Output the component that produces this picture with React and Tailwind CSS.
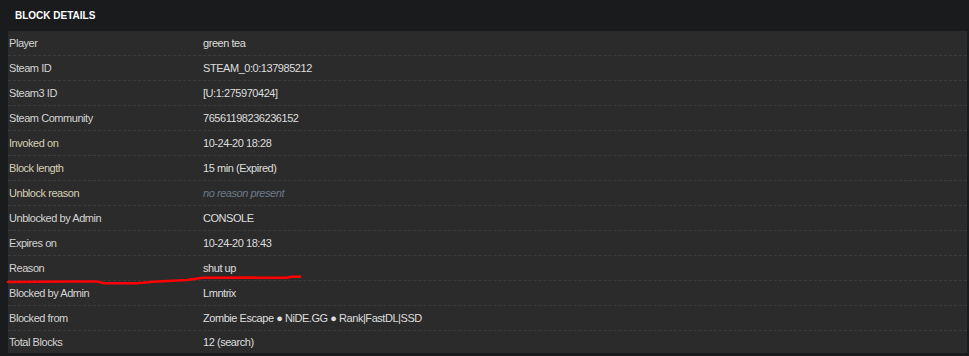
import React from "react";

const rows = [
  ["Player", "green tea"],
  ["Steam ID", "STEAM_0:0:137985212"],
  ["Steam3 ID", "[U:1:275970424]"],
  ["Steam Community", "76561198236236152"],
  ["Invoked on", "10-24-20 18:28", true],
  ["Block length", "15 min (Expired)", true],
  ["Unblock reason", null, true],
  ["Unblocked by Admin", "CONSOLE"],
  ["Expires on", "10-24-20 18:43"],
  ["Reason", "shut up"],
  ["Blocked by Admin", "Lmntrix"],
  ["Blocked from", "Zombie Escape \u25CF NiDE.GG \u25CF Rank|FastDL|SSD"],
  ["Total Blocks", "12 (search)"],
];

export default function App() {
  return (
    <div
      className="relative w-[969px] h-[356px] bg-[#1a1b1d] overflow-hidden text-[11px] tracking-[-0.45px]"
      style={{ fontFamily: '"Liberation Sans", Arial, sans-serif' }}
    >
      <div className="h-[31px] flex items-center pl-[15px]">
        <span className="font-bold text-[10px] text-white tracking-[0px]">BLOCK DETAILS</span>
      </div>
      <div className="ml-[8px] mr-[2px] bg-[#2b2b2b] h-[322px]">
        {rows.map(([label, value, warm], i) => (
          <div
            key={label}
            className={`flex items-center pt-[1px] ${
              i < rows.length - 1 ? "h-[25px] border-b border-dashed border-[#3b3b3b]" : "h-[22px]"
            }`}
          >
            <div className={`w-[195px] pl-[1px] ${warm ? "text-[#d6d0b6]" : "text-[#d4d4d4]"}`}>{label}</div>
            <div className="text-[#dedede]">
              {value === null ? (
                <span className="italic text-[#6c7a89]">no reason present</span>
              ) : (
                value
              )}
            </div>
          </div>
        ))}
      </div>
      <svg
        className="absolute left-0 top-0 pointer-events-none"
        width="969"
        height="356"
        viewBox="0 0 969 356"
      >
        <path
          d="M8 282 L70 281.5 L97 281.5 L104 283.3 L137 283.3 L153 281.7 L187 280 L203 277.8 L287 277.6 L292 276.8 L300 276.6"
          fill="none"
          stroke="#ff0000"
          strokeWidth="2.6"
          strokeLinecap="round"
          strokeLinejoin="round"
        />
      </svg>
    </div>
  );
}
